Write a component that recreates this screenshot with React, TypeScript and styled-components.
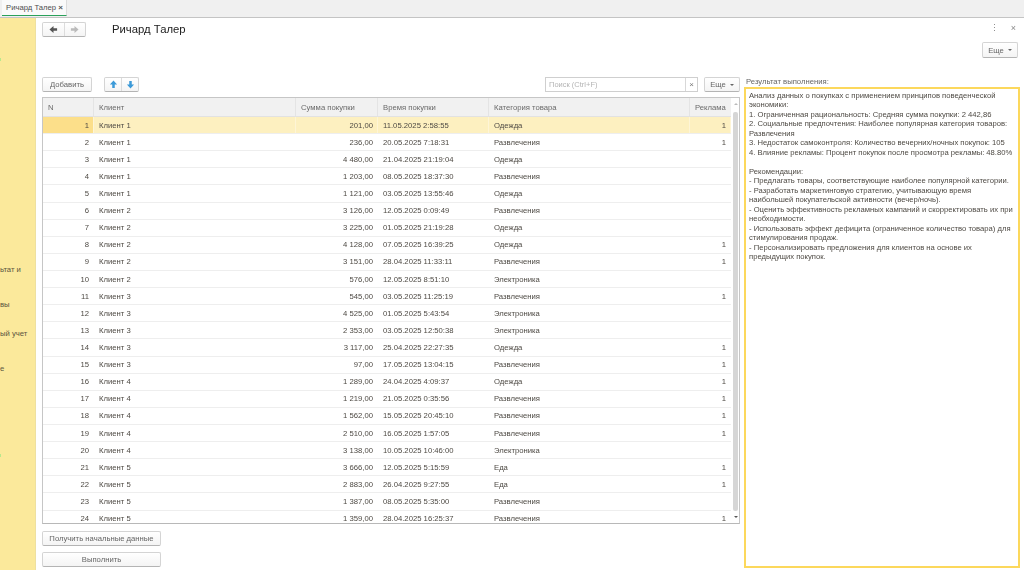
import React from "react";
import styled, { createGlobalStyle } from "styled-components";

const Global = createGlobalStyle`
  html, body { margin: 0; padding: 0; background: #fff; }
  body { font-family: "Liberation Sans", Arial, sans-serif; font-size: 7.7px; color: #4a4a4a; overflow: hidden; }
  #root { width: 1024px; height: 570px; }
`;

const Page = styled.div`
  width: 1024px; height: 570px; display: flex; flex-direction: column; overflow: hidden; filter: blur(0.3px);
`;
const TabBar = styled.div`
  height: 18px; box-sizing: border-box; flex: none; background: #f0f0f0; border-bottom: 1px solid #c4c4c4; display: flex; align-items: stretch; padding-left: 2px;
`;
const Tab = styled.div`
  width: 65px; height: 16px; box-sizing: border-box; background: #fafafa; border-right: 1px solid #dcdcdc; border-bottom: 1px solid #2aa05a;
  display: flex; align-items: center; justify-content: space-between; padding: 0 3px 0 4px; font-size: 7.7px; color: #4f4f4f; white-space: nowrap;
`;
const TabClose = styled.span`font-size: 8px; font-weight: bold; color: #555;`;
const Content = styled.div`flex: 1; display: flex; min-height: 0;`;
const Sidebar = styled.div`
  width: 35px; flex: none; background: #fbe99b; border-right: 1px solid #eee0a0; overflow: hidden;
  display: flex; flex-direction: column; font-size: 7.7px; color: #5a5540; white-space: nowrap;
`;
const SideItem = styled.div<{ $top?: number; $gap: number }>`
  margin-top: ${p => p.$top ?? 0}px; margin-bottom: ${p => p.$gap}px; height: 10px; line-height: 10px;
`;
const SideMark = styled.div<{ $top: number }>`width: 1px; height: 3px; background: #b8e88c; margin-top: ${p => p.$top}px; flex: none;`;
const Main = styled.div`flex: 1; display: flex; flex-direction: column; padding: 4px 4px 0 6px; min-width: 0;`;
const Header = styled.div`height: 55px; flex: none; display: flex; justify-content: space-between;`;
const HeaderLeft = styled.div`display: flex; align-items: flex-start; gap: 26px;`;
const Title = styled.div`font-size: 11.3px; color: #222; line-height: 14px;`;
const HeaderRight = styled.div`display: flex; flex-direction: column; align-items: flex-end; gap: 8px; padding-right: 2px;`;
const WindowIcons = styled.div`display: flex; gap: 12px; height: 12px; align-items: center; padding-right: 2px; color: #888; font-size: 9px;`;
const BtnBase = styled.div`
  box-sizing: border-box; background: linear-gradient(#fff, #f4f4f4); border: 1px solid #d4d4d4; border-bottom-color: #b4b4b4; border-radius: 2px;
  display: flex; align-items: center; justify-content: center; color: #666; font-size: 7.7px;
`;
const Group = styled(BtnBase)<{ $w: number }>`width: ${p => p.$w}px; height: 15px; flex: none; justify-content: stretch;`;
const GroupCell = styled.div`flex: 1; height: 100%; display: flex; align-items: center; justify-content: center; & + & { border-left: 1px solid #dcdcdc; }`;
const Btn = styled(BtnBase)<{ $w: number; $h?: number }>`width: ${p => p.$w}px; height: ${p => p.$h ?? 15}px; flex: none;`;
const Caret = styled.span`display: inline-block; margin-left: 4px; border: 2px solid transparent; border-top: 2.5px solid #666; border-bottom: 0;`;
const Body = styled.div`flex: 1; display: flex; gap: 4px; min-height: 0;`;
const LeftCol = styled.div`width: 698px; flex: none; display: flex; flex-direction: column;`;
const Toolbar = styled.div`height: 15px; flex: none; display: flex; align-items: center; margin-bottom: 5px;`;
const ArrowGroupWrap = styled.div`margin-left: 12px;`;
const Spacer = styled.div`flex: 1;`;
const Search = styled.div`
  width: 153px; height: 15px; box-sizing: border-box; border: 1px solid #cfcfcf; display: flex; align-items: center; justify-content: space-between;
  color: #b4b4b4; font-size: 7.5px; padding-left: 3px; margin-right: 6px; background: #fff;
`;
const SearchClear = styled.span`width: 11px; height: 100%; border-left: 1px solid #d8d8d8; display: flex; align-items: center; justify-content: center; color: #777; font-size: 8px;`;
const Table = styled.div`
  height: 427px; flex: none; box-sizing: border-box; border: 1px solid #c6c6c6; border-bottom-color: #b8b8b8; position: relative; overflow: hidden; background: #fff;
`;
const columns = "51px 202px 82px 111px 201px 41px";
const HeadRow = styled.div`
  display: grid; grid-template-columns: ${columns}; height: 19px; background: #f1f1f1; border-bottom: 1px solid #e2e2e2; margin-right: 8px; box-sizing: border-box;
`;
const HeadCell = styled.div`
  display: flex; align-items: center; padding-left: 5px; color: #6a6a6a; font-size: 7.7px; border-right: 1px solid #e4e4e4; white-space: nowrap; overflow: hidden;
  &:last-child { border-right: 0; }
`;
const Row = styled.div<{ $on?: boolean }>`
  display: grid; grid-template-columns: ${columns}; height: 17.12px; box-sizing: border-box; margin-right: 8px;
  border-bottom: 1px solid #eeeeee; background: ${p => (p.$on ? "#fdf0c0" : "#fff")};
  ${p => (p.$on ? "& > div { box-shadow: inset -1px 0 0 #fef5d6; }" : "")}
`;
const Cell = styled.div<{ $right?: boolean; $cur?: boolean }>`
  display: flex; align-items: center; padding: 0 5px; color: #4e4a44; font-size: 7.7px; white-space: nowrap; overflow: hidden;
  justify-content: ${p => (p.$right ? "flex-end" : "flex-start")};
  background: ${p => (p.$cur ? "#fcdf8a" : "transparent")};
`;
const ScrollTrack = styled.div`position: absolute; top: 0; right: 0; width: 8px; bottom: 0; background: #fff;`;
const ScrollThumb = styled.div`position: absolute; top: 14px; left: 2px; width: 4.5px; height: 399px; background: #d6d6d6; border-radius: 2px;`;
const ScrollArrow = styled.div<{ $up?: boolean }>`
  position: absolute; left: 2.5px; ${p => (p.$up ? "top: 5px; border-bottom: 2.5px solid #bbb;" : "bottom: 5px; border-top: 2.5px solid #555;")}
  border-left: 2px solid transparent; border-right: 2px solid transparent;
`;
const BottomBtns = styled.div`display: flex; flex-direction: column; gap: 6px; padding-top: 7px;`;
const RightCol = styled.div`flex: 1; display: flex; flex-direction: column; min-width: 0;`;
const ResultLabel = styled.div`height: 10px; line-height: 10px; font-size: 7.7px; color: #666; padding-left: 2px; flex: none;`;
const ResultBox = styled.div`
  width: 276px; height: 481px; flex: none; box-sizing: border-box; border: 2px solid #fcd85c; padding: 2px 3px; background: #fff;
  font-size: 7.65px; line-height: 9.47px; color: #4e4a44; white-space: pre-wrap;
`;

const rows: [string, string, string, string, string][] = [
  ["Клиент 1","201,00","11.05.2025 2:58:55","Одежда","1"],
  ["Клиент 1","236,00","20.05.2025 7:18:31","Развлечения","1"],
  ["Клиент 1","4 480,00","21.04.2025 21:19:04","Одежда",""],
  ["Клиент 1","1 203,00","08.05.2025 18:37:30","Развлечения",""],
  ["Клиент 1","1 121,00","03.05.2025 13:55:46","Одежда",""],
  ["Клиент 2","3 126,00","12.05.2025 0:09:49","Развлечения",""],
  ["Клиент 2","3 225,00","01.05.2025 21:19:28","Одежда",""],
  ["Клиент 2","4 128,00","07.05.2025 16:39:25","Одежда","1"],
  ["Клиент 2","3 151,00","28.04.2025 11:33:11","Развлечения","1"],
  ["Клиент 2","576,00","12.05.2025 8:51:10","Электроника",""],
  ["Клиент 3","545,00","03.05.2025 11:25:19","Развлечения","1"],
  ["Клиент 3","4 525,00","01.05.2025 5:43:54","Электроника",""],
  ["Клиент 3","2 353,00","03.05.2025 12:50:38","Электроника",""],
  ["Клиент 3","3 117,00","25.04.2025 22:27:35","Одежда","1"],
  ["Клиент 3","97,00","17.05.2025 13:04:15","Развлечения","1"],
  ["Клиент 4","1 289,00","24.04.2025 4:09:37","Одежда","1"],
  ["Клиент 4","1 219,00","21.05.2025 0:35:56","Развлечения","1"],
  ["Клиент 4","1 562,00","15.05.2025 20:45:10","Развлечения","1"],
  ["Клиент 4","2 510,00","16.05.2025 1:57:05","Развлечения","1"],
  ["Клиент 4","3 138,00","10.05.2025 10:46:00","Электроника",""],
  ["Клиент 5","3 666,00","12.05.2025 5:15:59","Еда","1"],
  ["Клиент 5","2 883,00","26.04.2025 9:27:55","Еда","1"],
  ["Клиент 5","1 387,00","08.05.2025 5:35:00","Развлечения",""],
  ["Клиент 5","1 359,00","28.04.2025 16:25:37","Развлечения","1"],
];

const result = `Анализ данных о покупках с применением принципов поведенческой экономики:
1. Ограниченная рациональность: Средняя сумма покупки: 2 442,86
2. Социальные предпочтения: Наиболее популярная категория товаров: Развлечения
3. Недостаток самоконтроля: Количество вечерних/ночных покупок: 105
4. Влияние рекламы: Процент покупок после просмотра рекламы: 48.80%

Рекомендации:
- Предлагать товары, соответствующие наиболее популярной категории.
- Разработать маркетинговую стратегию, учитывающую время наибольшей покупательской активности (вечер/ночь).
- Оценить эффективность рекламных кампаний и скорректировать их при необходимости.
- Использовать эффект дефицита (ограниченное количество товара) для стимулирования продаж.
- Персонализировать предложения для клиентов на основе их предыдущих покупок.`;

const Arrow = ({ dir, color }: { dir: "left" | "right" | "up" | "down"; color: string }) => {
  const rot = { right: 0, down: 90, left: 180, up: 270 }[dir];
  return (
    <svg width="9" height="9" viewBox="0 0 10 10" style={{ transform: `rotate(${rot}deg)` }}>
      <path d="M1 3.6H5V1L9.5 5L5 9V6.4H1Z" fill={color} />
    </svg>
  );
};

export default function App() {
  return (
    <Page>
      <Global />
      <TabBar>
        <Tab>Ричард Талер<TabClose>×</TabClose></Tab>
      </TabBar>
      <Content>
        <Sidebar>
          <SideMark $top={40} />
          <SideItem $top={204} $gap={25}>ьтат и</SideItem>
          <SideItem $gap={19}>вы</SideItem>
          <SideItem $gap={25}>ый учет</SideItem>
          <SideItem $gap={0}>е</SideItem>
          <SideMark $top={80} />
        </Sidebar>
        <Main>
          <Header>
            <HeaderLeft>
              <Group $w={44}>
                <GroupCell><Arrow dir="left" color="#555" /></GroupCell>
                <GroupCell><Arrow dir="right" color="#bbb" /></GroupCell>
              </Group>
              <Title>Ричард Талер</Title>
            </HeaderLeft>
            <HeaderRight>
              <WindowIcons><span>⋮</span><span>×</span></WindowIcons>
              <Btn $w={36} $h={16}>Еще<Caret /></Btn>
            </HeaderRight>
          </Header>
          <Body>
            <LeftCol>
              <Toolbar>
                <Btn $w={50}>Добавить</Btn>
                <ArrowGroupWrap>
                  <Group $w={35}>
                    <GroupCell><Arrow dir="up" color="#3c9ad8" /></GroupCell>
                    <GroupCell><Arrow dir="down" color="#3c9ad8" /></GroupCell>
                  </Group>
                </ArrowGroupWrap>
                <Spacer />
                <Search>Поиск (Ctrl+F)<SearchClear>×</SearchClear></Search>
                <Btn $w={36}>Еще<Caret /></Btn>
              </Toolbar>
              <Table>
                <HeadRow>
                  <HeadCell>N</HeadCell>
                  <HeadCell>Клиент</HeadCell>
                  <HeadCell>Сумма покупки</HeadCell>
                  <HeadCell>Время покупки</HeadCell>
                  <HeadCell>Категория товара</HeadCell>
                  <HeadCell>Реклама</HeadCell>
                </HeadRow>
                {rows.map((r, i) => (
                  <Row key={i} $on={i === 0}>
                    <Cell $right $cur={i === 0}>{i + 1}</Cell>
                    <Cell>{r[0]}</Cell>
                    <Cell $right>{r[1]}</Cell>
                    <Cell>{r[2]}</Cell>
                    <Cell>{r[3]}</Cell>
                    <Cell $right>{r[4]}</Cell>
                  </Row>
                ))}
                <ScrollTrack>
                  <ScrollArrow $up />
                  <ScrollThumb />
                  <ScrollArrow />
                </ScrollTrack>
              </Table>
              <BottomBtns>
                <Btn $w={119}>Получить начальные данные</Btn>
                <Btn $w={119}>Выполнить</Btn>
              </BottomBtns>
            </LeftCol>
            <RightCol>
              <ResultLabel>Результат выполнения:</ResultLabel>
              <ResultBox>{result}</ResultBox>
            </RightCol>
          </Body>
        </Main>
      </Content>
    </Page>
  );
}
